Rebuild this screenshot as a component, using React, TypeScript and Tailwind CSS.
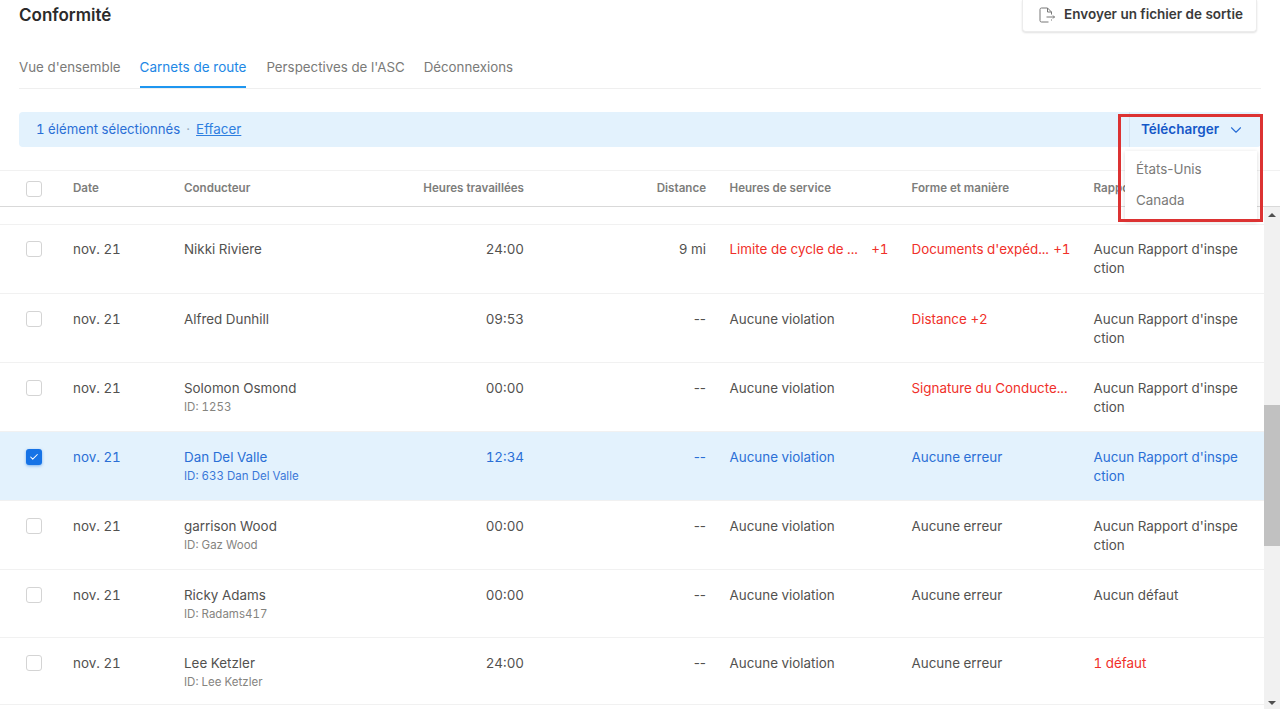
import React from "react";
import { Check, ChevronDown } from "lucide-react";

type Row = {
  date: string;
  name: string;
  id?: string;
  hours: string;
  distance: string;
  service: string;
  serviceExtra?: string;
  form: string;
  formExtra?: string;
  formRed?: boolean;
  report: string;
  reportRed?: boolean;
  selected?: boolean;
  height: string;
};

const NO_REPORT = "Aucun Rapport d'inspection";

const rows: Row[] = [
  { date: "nov. 21", name: "Nikki Riviere", hours: "24:00", distance: "9 mi", service: "Limite de cycle de ...", serviceExtra: "+1", form: "Documents d'expéd...", formExtra: "+1", formRed: true, report: NO_REPORT, height: "h-[69px]" },
  { date: "nov. 21", name: "Alfred Dunhill", hours: "09:53", distance: "--", service: "Aucune violation", form: "Distance +2", formRed: true, report: NO_REPORT, height: "h-[69px]" },
  { date: "nov. 21", name: "Solomon Osmond", id: "ID: 1253", hours: "00:00", distance: "--", service: "Aucune violation", form: "Signature du Conducte...", formRed: true, report: NO_REPORT, height: "h-[69px]" },
  { date: "nov. 21", name: "Dan Del Valle", id: "ID: 633 Dan Del Valle", hours: "12:34", distance: "--", service: "Aucune violation", form: "Aucune erreur", report: NO_REPORT, selected: true, height: "h-[69px]" },
  { date: "nov. 21", name: "garrison Wood", id: "ID: Gaz Wood", hours: "00:00", distance: "--", service: "Aucune violation", form: "Aucune erreur", report: NO_REPORT, height: "h-[69px]" },
  { date: "nov. 21", name: "Ricky Adams", id: "ID: Radams417", hours: "00:00", distance: "--", service: "Aucune violation", form: "Aucune erreur", report: "Aucun défaut", height: "h-[68px]" },
  { date: "nov. 21", name: "Lee Ketzler", id: "ID: Lee Ketzler", hours: "24:00", distance: "--", service: "Aucune violation", form: "Aucune erreur", report: "1 défaut", reportRed: true, height: "h-[67px]" },
];

const gridCols = "grid grid-cols-[73px_111px_180px_160px_182px_23.5px_182px_182px_1fr]";

const Checkbox = ({ checked }: { checked?: boolean }) =>
  checked ? (
    <span className="w-4 h-4 rounded-[3px] bg-[#1673e6] flex items-center justify-center shadow-[0_1px_3px_rgba(22,115,230,0.5)]">
      <Check className="w-2.5 h-2.5 text-white" strokeWidth={2.5} />
    </span>
  ) : (
    <span className="w-4 h-4 rounded-[3px] border border-[#d4d4d4] bg-white block" />
  );

const TableRow = ({ row }: { row: Row }) => {
  const base = row.selected ? "text-[#2a6fd6]" : "text-[#52514f]";
  return (
    <div className={`${gridCols} ${row.height} border-b border-[#f1f1f1] pt-[16px] [&:nth-child(2)]:pt-[15px] text-[13.4px] leading-[19px] tabular-nums ${base} ${row.selected ? "bg-[#e3f2fd]" : "bg-white"}`}>
      <div className="pl-[26px] pt-px">
        <Checkbox checked={row.selected} />
      </div>
      <div>{row.date}</div>
      <div>
        <div>{row.name}</div>
        {row.id && (
          <div className={`text-[11.5px] leading-[15px] mt-[2px] ${row.selected ? "text-[#3b78d8]" : "text-[#85847f]"}`}>{row.id}</div>
        )}
      </div>
      <div className="text-right">{row.hours}</div>
      <div className="text-right normal-nums">{row.distance}</div>
      <div className={`col-start-7 flex justify-between pr-[23px] ${row.serviceExtra ? "text-[#f0302a]" : ""}`}>
        <span>{row.service}</span>
        {row.serviceExtra && <span>{row.serviceExtra}</span>}
      </div>
      <div className={`flex justify-between pr-[23px] whitespace-nowrap ${row.formRed ? "text-[#f0302a]" : ""}`}>
        <span>{row.form}</span>
        {row.formExtra && <span>{row.formExtra}</span>}
      </div>
      <div className={`w-[148px] break-all ${row.reportRed ? "text-[#f0302a]" : ""}`}>{row.report}</div>
    </div>
  );
};

export default function App() {
  return (
    <div className="relative h-[709px] w-[1280px] overflow-hidden bg-white font-['Inter',sans-serif]">
      <div className="flex h-[33px] items-start justify-between pl-[19px] pr-[23px]">
        <h1 className="mt-[4px] text-[17px] leading-[22px] font-semibold text-[#2b2b2b]">Conformité</h1>
        <button className="flex h-[32px] w-[235px] items-center justify-center gap-[9px] pb-[2px] pl-[3px] rounded-b bg-white text-[13.5px] font-semibold text-[#3a3a3a] border border-t-0 border-[#ececec] shadow-[0_1px_2px_rgba(0,0,0,0.12)]">
          <svg width="16" height="16" viewBox="0 0 16 16" fill="none" stroke="#777" strokeWidth="1">
            <path d="M9.5 15H2.5A1.5 1.5 0 0 1 1 13.5v-11A1.5 1.5 0 0 1 2.5 1h6l4 4v2.5M12.5 12.5v1" />
            <path d="M8.5 1v4h4" />
            <path d="M7.5 10h8M14 8.5l1.5 1.5L14 11.5" />
          </svg>
          Envoyer un fichier de sortie
        </button>
      </div>

      <div className="mx-[19px] mt-[22px] flex h-[34px] gap-[20px] border-b border-[#efefef] text-[13.3px] leading-[24px] text-[#7a7a78]">
        <div>Vue d'ensemble</div>
        <div className="-ml-px h-[33px] border-b-2 border-[#1e96f0] text-[13.5px] text-[#1e88e5]">Carnets de route</div>
        <div>Perspectives de l'ASC</div>
        <div className="-ml-px">Déconnexions</div>
      </div>

      <div className="mx-[19px] mt-[23px] flex h-[35px] items-center justify-between rounded-sm bg-[#e3f2fd] pl-[17px] text-[13.2px] tabular-nums text-[#2a6fd6]">
        <div className="flex items-center">
          <span>1 élément sélectionnés</span>
          <span className="mx-[6px] text-[#9ab]">·</span>
          <a className="underline text-[13.4px] text-[#2f7fe0]">Effacer</a>
        </div>
        <div className="flex h-full w-[132px] items-center justify-center gap-[8px] pr-[5px] border-l border-[#d4e4f2] text-[13.5px] font-semibold text-[#1558c8]">
          Télécharger
          <ChevronDown className="h-[18px] w-[18px] text-[#2a6fd6]" strokeWidth={1.5} />
        </div>
      </div>

      <div className={`${gridCols} mt-[23px] h-[37px] items-center border-y border-t-[#f1f1f1] border-b-[#d9d9d9] pr-4 text-[11.6px] font-semibold text-[#7d7d7b]`}>
        <div className="pl-[26px]">
          <Checkbox />
        </div>
        <div>Date</div>
        <div>Conducteur</div>
        <div className="text-right">Heures travaillées</div>
        <div className="text-right">Distance</div>
        <div className="col-start-7">Heures de service</div>
        <div>Forme et manière</div>
        <div>Rapports</div>
      </div>

      <div className="flex h-[503px]">
        <div className="w-[1264px]">
          <div className="h-[18px] border-b border-[#f1f1f1]" />
          {rows.map((row) => (
            <TableRow key={row.name} row={row} />
          ))}
        </div>
        <div className="flex w-4 flex-col items-center bg-[#f1f1f1]">
          <div className="flex h-[15px] items-center">
            <span className="border-x-[4px] border-b-[4px] border-x-transparent border-b-[#505050]" />
          </div>
          <div className="mt-[183px] h-[141px] w-full bg-[#c1c1c1]" />
          <div className="mt-auto flex h-[15px] items-center">
            <span className="border-x-[4px] border-t-[4px] border-x-transparent border-t-[#505050]" />
          </div>
        </div>
      </div>

      <div className="absolute left-[1125px] top-[151px] flex h-[70px] w-[132px] flex-col gap-[11px] bg-white pl-[11px] pt-[8px] text-[13.4px] leading-[20px] text-[#7a7a78] shadow-[0_1px_4px_rgba(0,0,0,0.15)]">
        <div>États-Unis</div>
        <div>Canada</div>
      </div>
      <div className="pointer-events-none absolute left-[1118px] top-[114px] h-[108px] w-[145px] border-[3px] border-[#dc3232]" />
    </div>
  );
}
